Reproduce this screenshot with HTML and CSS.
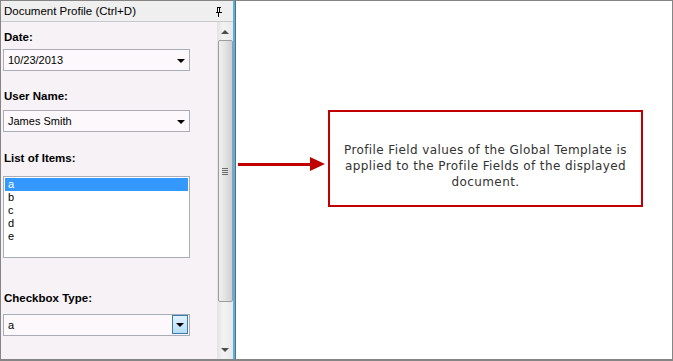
FILE: index.html
```html
<!DOCTYPE html>
<html lang="en">
  <head>
    <meta charset="UTF-8" />
    <title>Document Profile</title>
    <link rel="stylesheet" href="styles.css">
  </head>
  <body>
    <div class="window">
      <div class="panel">
        <div class="panel-header">
          <span>Document Profile (Ctrl+D)</span>
          <svg class="pin" width="8" height="10" viewBox="0 0 8 10">
            <path d="M2 0h4v1H5v4h2v1H4v4H3V6H1V5h1V1H2z" fill="#000" />
            <rect x="3" y="1" width="1" height="4" fill="#fff" />
          </svg>
        </div>
        <div class="panel-body">
          <div class="fields">
            <div class="field-label first">Date:</div>
            <div class="dropdown">
              <span>10/23/2013</span>
              <span class="drop-btn"><span class="tri"></span></span>
            </div>

            <div class="field-label gap-a">User Name:</div>
            <div class="dropdown">
              <span>James Smith</span>
              <span class="drop-btn"><span class="tri"></span></span>
            </div>

            <div class="field-label gap-b">List of Items:</div>
            <ul class="listbox">
              <li class="selected">a</li>
              <li>b</li>
              <li>c</li>
              <li>d</li>
              <li>e</li>
            </ul>

            <div class="field-label gap-c">Checkbox Type:</div>
            <div class="dropdown">
              <span>a</span>
              <span class="drop-btn hot"><span class="tri"></span></span>
            </div>
          </div>
          <div class="scrollbar">
            <div class="arrow-up"></div>
            <div class="thumb"><span class="grip"></span></div>
            <div class="arrow-down"></div>
          </div>
        </div>
      </div>
      <div class="canvas">
        <div class="pointer">
          <span class="shaft"></span>
          <span class="head"></span>
        </div>
        <div class="note">
          Profile Field values of the Global Template is applied to the Profile Fields of the displayed document.
        </div>
      </div>
    </div>
  </body>
</html>
```

FILE: styles.css
```css
body {
  margin: 0;
  background-color: #fff;
}
.window {
  width: 671px;
  height: 358px;
  border: 1px solid #858585;
  border-bottom: 2px solid #858585;
  display: flex;
  font-family: "Liberation Sans", Arial, sans-serif;
  font-size: 11px;
  color: #000;
}
.panel {
  width: 232px;
  display: flex;
  flex-direction: column;
  background-color: #f6f2f5;
  border-right: 2px solid #4eb4ee;
  box-shadow: 1px 0 0 #6a6a6a;
  margin-right: 1px;
}
.panel-header {
  height: 20px;
  display: flex;
  align-items: center;
  justify-content: space-between;
  padding: 0 10px 0 3px;
  background-color: #efefef;
  border-bottom: 1px solid #c9c9c9;
  font-size: 11.5px;
}
.pin {
  margin-top: 1px;
}
.panel-body {
  flex: 1;
  display: flex;
  min-height: 0;
}
.fields {
  flex: 1;
  padding-left: 2px;
}
.field-label {
  font-weight: bold;
  font-size: 11.5px;
  line-height: 14px;
  padding-left: 1px;
}
.field-label.first {
  margin-top: 8px;
  margin-bottom: 5px;
}
.field-label.gap-a {
  margin-top: 18px;
  margin-bottom: 7px;
}
.field-label.gap-b {
  margin-top: 19px;
  margin-bottom: 11px;
}
.field-label.gap-c {
  margin-top: 33px;
  margin-bottom: 9px;
}
.dropdown {
  height: 20px;
  border: 1px solid #a9adb7;
  background-color: #fcf8fb;
  display: flex;
  align-items: center;
  justify-content: space-between;
  padding-left: 4px;
  width: 181px;
}
.drop-btn {
  width: 17px;
  height: 20px;
  display: flex;
  align-items: center;
  justify-content: center;
  box-sizing: border-box;
}
.drop-btn.hot {
  border: 1px solid #3d7bad;
  background: linear-gradient(#e3f2fc, #b5ddf7);
  height: 19px;
  margin-top: -1px;
  width: 16px;
  margin-right: 1px;
}
.tri {
  width: 0;
  height: 0;
  border-left: 4px solid transparent;
  border-right: 4px solid transparent;
  border-top: 4px solid #000;
  margin-top: 1px;
}
.listbox {
  list-style: none;
  margin: 0;
  width: 183px;
  height: 78px;
  border: 1px solid #a9adb7;
  background-color: #fff;
  padding: 1px;
}
.listbox li {
  height: 13px;
  line-height: 13px;
  padding-left: 3px;
}
.listbox li.selected {
  background-color: #3399ff;
  color: #fff;
}
.scrollbar {
  width: 16px;
  display: flex;
  flex-direction: column;
  align-items: center;
  background: linear-gradient(90deg, #e3e3e3, #f3f3f3 40%, #e8e8e8);
  padding: 8px 0 0;
}
.arrow-up,
.arrow-down {
  width: 0;
  height: 0;
  border-left: 4px solid transparent;
  border-right: 4px solid transparent;
}
.arrow-up {
  border-bottom: 4px solid #4d4d4d;
}
.arrow-down {
  border-top: 4px solid #4d4d4d;
  margin-top: 46px;
}
.thumb {
  width: 13px;
  height: 260px;
  margin-top: 6px;
  border: 1px solid #9d9d9d;
  border-radius: 2px;
  background: linear-gradient(90deg, #f0f0f0, #e2e2e2 50%, #cfcfcf);
  display: flex;
  align-items: center;
  justify-content: center;
}
.grip {
  width: 6px;
  height: 1px;
  background-color: #6b6b6b;
  box-shadow: 0 2px 0 #6b6b6b, 0 4px 0 #6b6b6b, 0 -2px 0 #6b6b6b;
  margin-top: -1px;
}
.canvas {
  flex: 1;
  display: flex;
  align-items: flex-start;
  padding: 109px 0 0 2px;
}
.pointer {
  display: flex;
  align-items: center;
  margin-top: 47px;
}
.shaft {
  width: 72px;
  height: 3px;
  background-color: #c00000;
}
.head {
  width: 0;
  height: 0;
  border-top: 7px solid transparent;
  border-bottom: 7px solid transparent;
  border-left: 15px solid #c00000;
}
.note {
  margin-left: 3px;
  width: 315px;
  height: 97px;
  border: 2px solid #c00000;
  display: flex;
  align-items: center;
  justify-content: center;
  text-align: center;
  font-family: "DejaVu Sans", Verdana, sans-serif;
  font-size: 12px;
  letter-spacing: 0.4px;
  line-height: 16px;
  color: #333;
  padding: 14px 6px 0;
  box-sizing: border-box;
}
```
